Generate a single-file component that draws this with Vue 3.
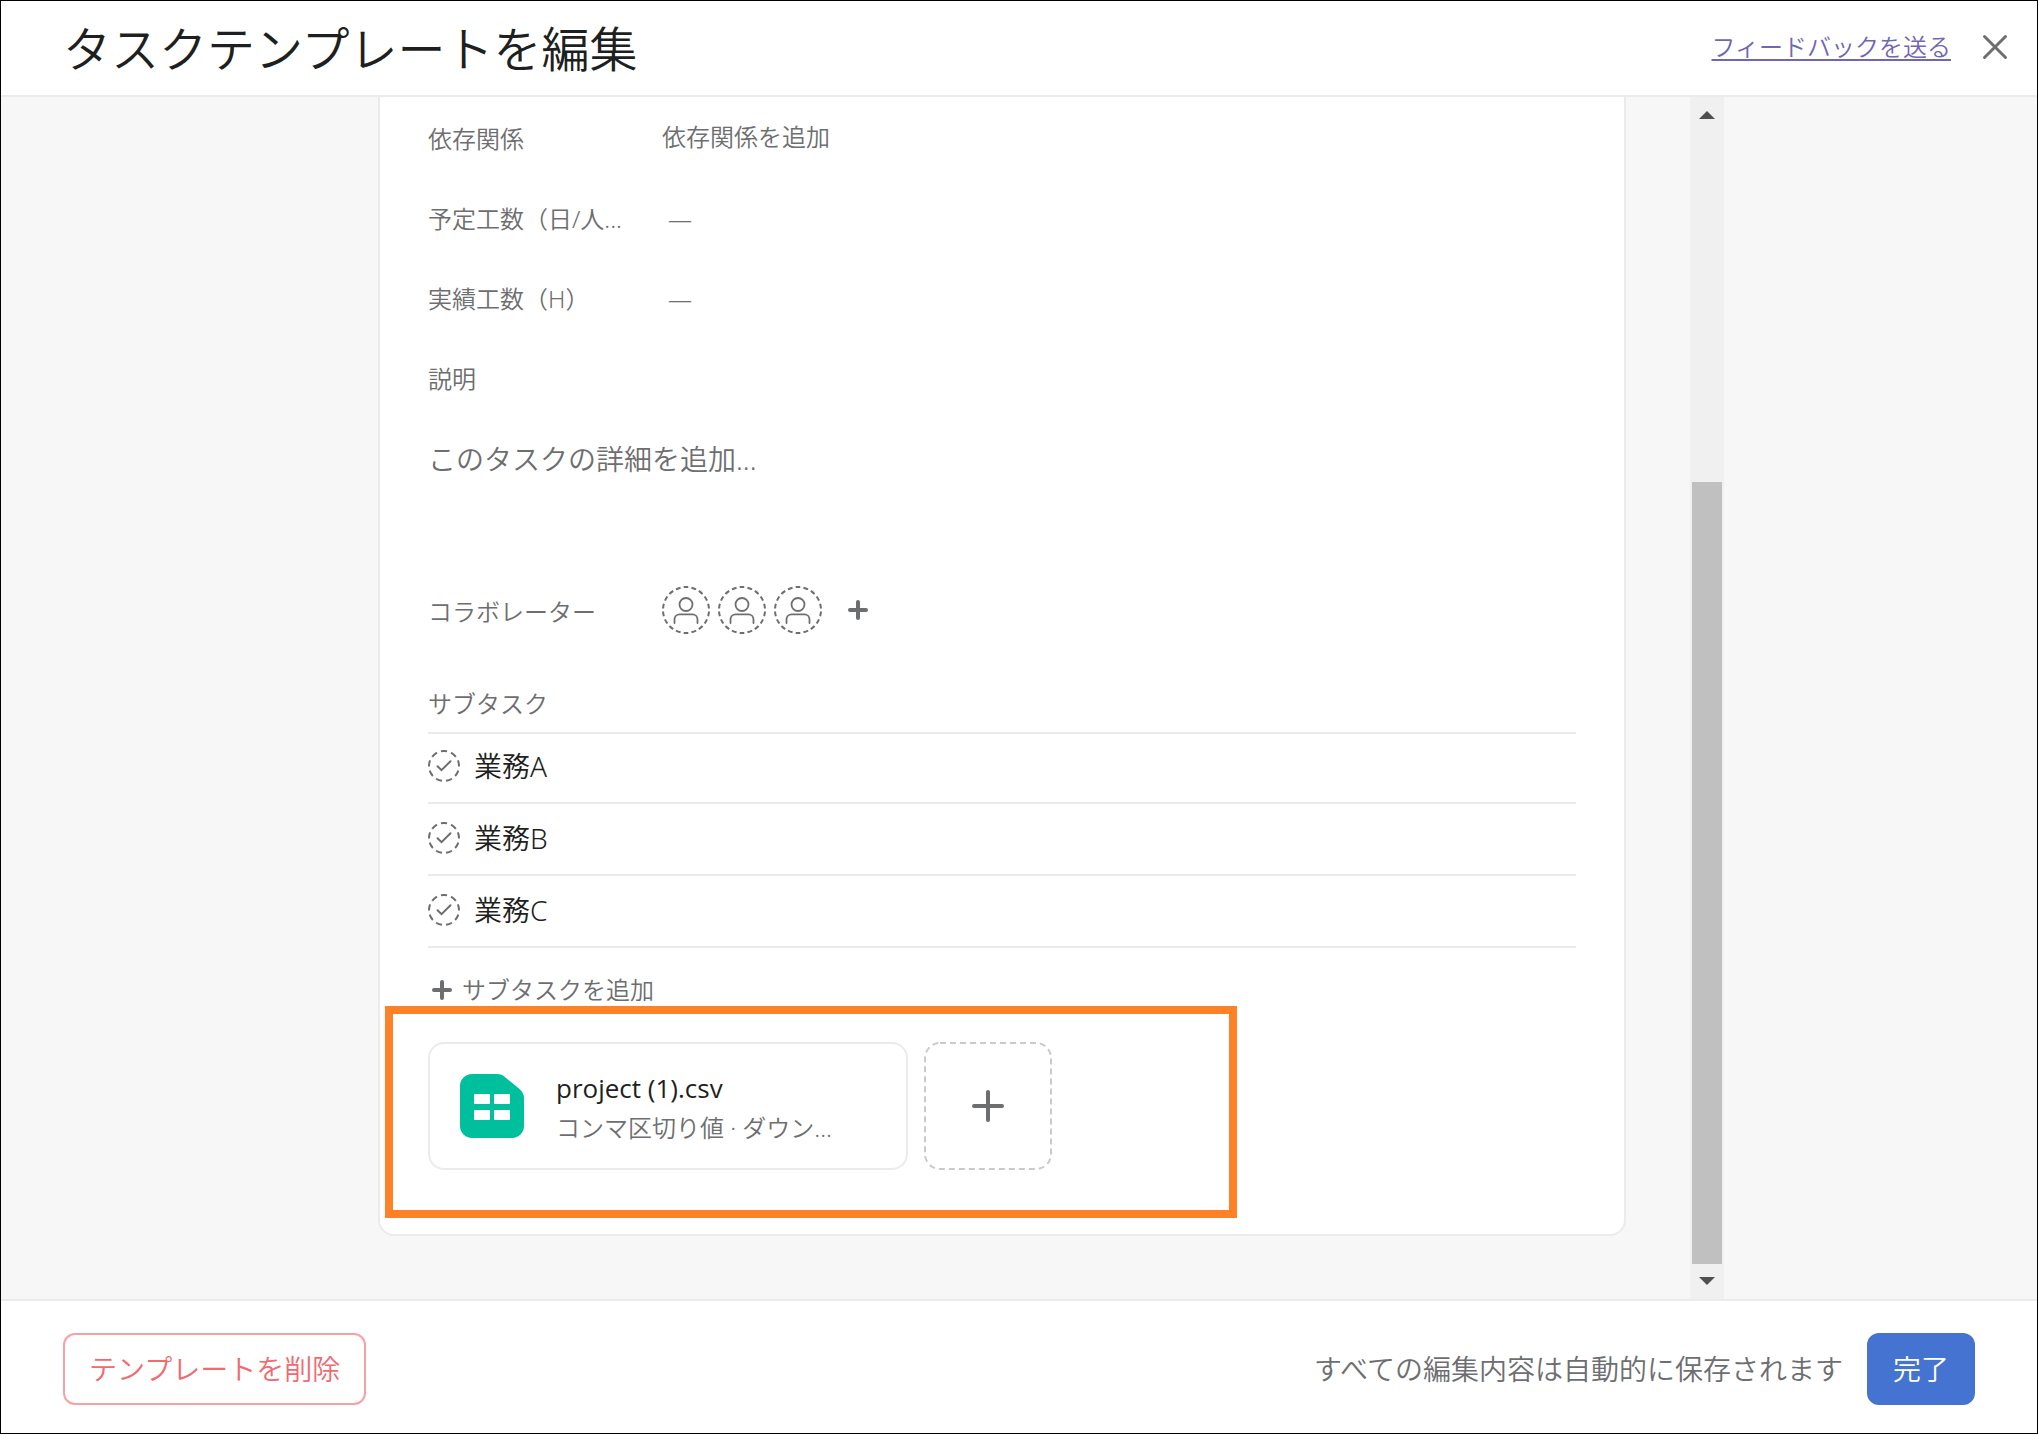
<script setup>
import { ref } from 'vue'

const fields = [
  { id: 'deps', label: '依存関係', value: '依存関係を追加', button: true },
  { id: 'planned', label: '予定工数（日/人...', value: '—' },
  { id: 'actual', label: '実績工数（H）', value: '—' },
]
const description = ref('')
const collaborators = [1, 2, 3]
const subtasks = ['業務A', '業務B', '業務C']
</script>

<template>
  <div class="dialog" role="dialog" aria-labelledby="dialog-title">
    <header class="header">
      <h1 id="dialog-title">タスクテンプレートを編集</h1>
      <a class="feedback" href="#feedback">フィードバックを送る</a>
      <button class="icon-btn close" aria-label="閉じる">
        <svg width="26" height="26" viewBox="0 0 26 26" fill="none" stroke="#6d6e6f" stroke-width="3" stroke-linecap="round">
          <path d="M2.500 2.500 23.500 23.500M23.500 2.500 2.500 23.500" />
        </svg>
      </button>
    </header>

    <main class="main">
      <div class="pane">
        <section class="card">
          <div v-for="f in fields" :key="f.id" class="row">
            <span class="label">{{ f.label }}</span>
            <button v-if="f.button" class="value add-dep">{{ f.value }}</button>
            <button v-else class="value number">{{ f.value }}</button>
          </div>
          <div class="row">
            <label class="label" for="description">説明</label>
          </div>
          <textarea id="description" v-model="description" class="description" placeholder="このタスクの詳細を追加..."></textarea>

          <div class="row people-row">
            <span class="label">コラボレーター</span>
            <div class="people">
              <svg v-for="c in collaborators" :key="c" width="48" height="48" viewBox="0 0 48 48" fill="none" stroke="#6d6e6f" stroke-width="2">
                <circle cx="24" cy="24" r="23" pathLength="180" stroke-dasharray="6 4" stroke-dashoffset="3" transform="rotate(-90 24 24)" />
                <g stroke-width="1.800" stroke-linecap="round">
                  <circle cx="24" cy="18.500" r="6.500" />
                  <path d="M12.500 37v-3.500c0-3 2.200-5.200 5.200-5.200h12.600c3 0 5.200 2.200 5.200 5.200V37" />
                </g>
              </svg>
              <button class="icon-btn add-person" aria-label="コラボレーターを追加">
                <svg width="20" height="20" viewBox="0 0 20 20" stroke="#6d6e6f" stroke-width="4" stroke-linecap="round"><path d="M10 2v16M2 10h16" /></svg>
              </button>
            </div>
          </div>

          <h2 class="sub-title">サブタスク</h2>
          <ul class="subtasks">
            <li v-for="s in subtasks" :key="s">
              <button class="icon-btn" :aria-label="s + 'を完了にする'">
                <svg width="32" height="32" viewBox="0 0 32 32" fill="none" stroke="#6d6e6f" stroke-width="2">
                  <circle cx="16" cy="16" r="15" pathLength="90" stroke-dasharray="6 4" stroke-dashoffset="3" transform="rotate(-90 16 16)" />
                  <path d="M9.500 16.200 13.500 20.200 22.500 11.200" stroke-linecap="round" />
                </svg>
              </button>
              <span>{{ s }}</span>
            </li>
          </ul>
          <button class="add-subtask">
            <svg width="20" height="20" viewBox="0 0 20 20" stroke="#6d6e6f" stroke-width="4" stroke-linecap="round"><path d="M10 2v16M2 10h16" /></svg>
            <span>サブタスクを追加</span>
          </button>

          <div class="attachments">
            <a class="file" href="#file">
              <svg width="64" height="64" viewBox="0 0 64 64">
                <path d="M12 0H37c3 0 6 1.200 8.200 3.200L59.500 15c2.900 2.400 4.500 5.600 4.500 9.200V52c0 6.600-5.400 12-12 12H12C5.400 64 0 58.600 0 52V12C0 5.400 5.400 0 12 0z" fill="#00bf9c" />
                <g fill="#fff">
                  <rect x="14" y="20" width="16" height="10" rx="1" /><rect x="34" y="20" width="16" height="10" rx="1" />
                  <rect x="14" y="36" width="16" height="10" rx="1" /><rect x="34" y="36" width="16" height="10" rx="1" />
                </g>
              </svg>
              <span class="file-text">
                <span class="file-name">project (1).csv</span>
                <span class="file-meta">コンマ区切り値 · ダウン...</span>
              </span>
            </a>
            <button class="add-file" aria-label="ファイルを添付">
              <svg class="dash" width="128" height="128" viewBox="0 0 128 128" fill="none">
                <rect x="1" y="1" width="126" height="126" rx="15" stroke="#cbc9c9" stroke-width="2" stroke-dasharray="6 4" />
                <path d="M64 50v28M50 64h28" stroke="#6d6e6f" stroke-width="4" stroke-linecap="round" />
              </svg>
            </button>
            <div class="highlight"></div>
          </div>
        </section>
      </div>

      <div class="scrollbar" aria-hidden="true">
        <svg width="34" height="34" viewBox="0 0 34 34"><path d="M9 22h16L17 14z" fill="#505050" /></svg>
        <div class="track"><div class="thumb"></div></div>
        <svg width="34" height="34" viewBox="0 0 34 34"><path d="M9 12h16L17 20z" fill="#505050" /></svg>
      </div>
    </main>

    <footer class="footer">
      <button class="delete">テンプレートを削除</button>
      <span class="saved">すべての編集内容は自動的に保存されます</span>
      <button class="done">完了</button>
    </footer>
  </div>
</template>

<style>
body {
  margin: 0;
}
</style>

<style scoped>
* {
  box-sizing: border-box;
}
.dialog {
  display: flex;
  flex-direction: column;
  min-height: 100vh;
  border: 1px solid #000;
  background: #fff;
  color: #1e1f21;
  font-family: "Noto Sans", "Noto Sans CJK JP", sans-serif;
  font-weight: 350;
  font-size: 24px;
  line-height: 32px;
}
button,
textarea {
  margin: 0;
  padding: 0;
  border: 0;
  background: none;
  color: inherit;
  font: inherit;
}
svg {
  display: block;
  flex: none;
}
.header {
  display: flex;
  align-items: center;
  height: 96px;
  padding: 0 29px 2px 62px;
  border-bottom: 2px solid #edeaea;
}
h1 {
  flex: 1;
  margin: 0;
  padding-top: 4px;
  font-size: 48px;
  line-height: 64px;
  font-weight: 350;
}
.feedback {
  color: #6f66b5;
  text-decoration: underline;
  text-decoration-thickness: 2px;
  text-underline-offset: 3px;
}
.close {
  margin-left: 31px;
}
.main {
  flex: 1;
  display: flex;
  align-items: stretch;
  justify-content: center;
  background: #f7f7f7;
}
.pane {
  flex: 0 1 1376px;
  padding: 0 64px 63px;
}
.card {
  padding: 2px 48px 64px;
  background: #fff;
  border: 2px solid #edeaea;
  border-top: 0;
  border-radius: 0 0 16px 16px;
}
.row {
  display: flex;
  align-items: center;
  height: 80px;
  color: #6d6e6f;
}
.label {
  width: 234px;
}
.people-row .label {
  padding-top: 4px;
}
.add-dep {
  padding-bottom: 4px;
}
.number {
  padding-left: 6px;
}
.description {
  display: block;
  width: 100%;
  height: 151px;
  padding: 20px 0;
  font-size: 28px;
  line-height: 40px;
  resize: none;
  outline: 0;
}
.description::placeholder {
  color: #6d6e6f;
  opacity: 1;
}
.people {
  display: flex;
  align-items: center;
  gap: 8px;
}
.add-person {
  margin-left: 18px;
}
.sub-title {
  margin: 38px 0 12px;
  color: #6d6e6f;
  font-size: 24px;
  line-height: 32px;
  font-weight: 350;
}
.subtasks {
  margin: 0;
  padding: 0;
  list-style: none;
  border-top: 2px solid #edeaea;
}
.subtasks li {
  display: flex;
  align-items: center;
  gap: 14px;
  padding: 18px 0 20px;
  border-bottom: 2px solid #edeaea;
  font-size: 28px;
}
.subtasks li:first-child {
  padding-top: 16px;
}
.add-subtask {
  display: flex;
  align-items: center;
  gap: 10px;
  margin-top: 26px;
  padding-left: 4px;
  color: #6d6e6f;
}
.attachments {
  position: relative;
  display: flex;
  gap: 16px;
  margin-top: 36px;
}
.file {
  display: flex;
  align-items: center;
  gap: 32px;
  width: 480px;
  height: 128px;
  padding: 0 30px;
  border: 2px solid #edeaea;
  border-radius: 16px;
  color: inherit;
  text-decoration: none;
}
.file-text {
  display: flex;
  flex-direction: column;
  gap: 6px;
  padding-top: 2px;
}
.file-name {
  font-family: "Open Sans", sans-serif;
  font-size: 26px;
  line-height: 36px;
  font-weight: 400;
}
.file-meta {
  color: #6d6e6f;
}
.highlight {
  position: absolute;
  left: -43px;
  top: -36px;
  width: 852px;
  height: 212px;
  border: 8px solid #ff8127;
  pointer-events: none;
}
.scrollbar {
  display: flex;
  flex-direction: column;
  width: 34px;
  background: #f0f0f0;
}
.track {
  flex: 1;
  display: flex;
  flex-direction: column;
  justify-content: flex-end;
  padding: 0 2px 1px;
}
.thumb {
  height: 69%;
  background: #c0c0c0;
}
.footer {
  display: flex;
  align-items: center;
  height: 134px;
  padding: 4px 62px 0;
  border-top: 2px solid #edeaea;
  font-size: 28px;
}
.delete {
  height: 72px;
  padding: 0 24px;
  border: 2px solid #f9a0a5;
  border-radius: 12px;
  color: #f06a6f;
}
.saved {
  margin-left: auto;
  color: #6d6e6f;
}
.done {
  width: 108px;
  height: 72px;
  margin-left: 24px;
  border-radius: 12px;
  background: #4573d2;
  color: #fff;
}
</style>
